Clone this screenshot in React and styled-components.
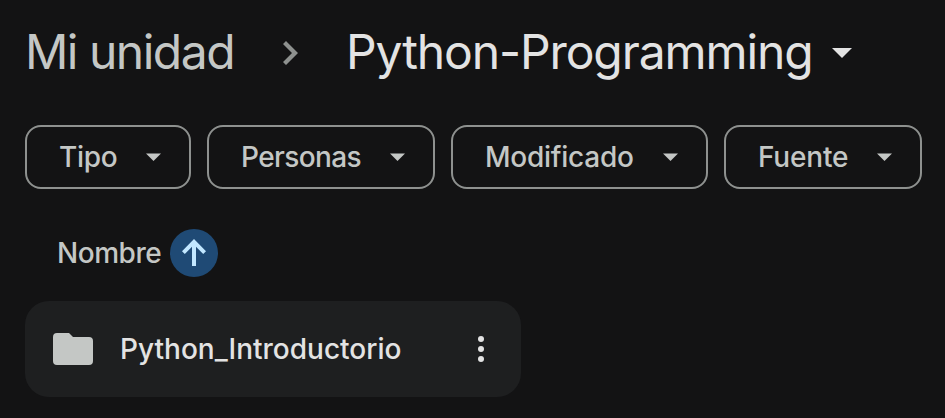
import React from "react";
import styled, { createGlobalStyle } from "styled-components";

const Global = createGlobalStyle`
  *, *::before, *::after { box-sizing: border-box; }
  body { margin: 0; background: #131314; overflow: hidden; }
  button { font: inherit; color: inherit; background: none; border: 0; padding: 0; margin: 0; }
  svg { display: block; flex: none; fill: currentColor; }
`;

const Page = styled.main`
  width: 945px;
  height: 418px;
  padding: 17px 23px 0 25px;
  background: #131314;
  color: #c4c7c5;
  font-family: Inter, sans-serif;
`;

const Breadcrumbs = styled.nav`
  display: flex;
  align-items: center;
  height: 72px;
`;

const Crumb = styled.button`
  display: flex;
  align-items: center;
  width: ${(p) => p.$width}px;
  padding-bottom: 2px;
  font-size: 48px;
  line-height: 70px;
  letter-spacing: ${(p) => p.$tracking}px;
  white-space: nowrap;
  color: ${(p) => (p.$current ? "#e3e3e3" : "#c4c7c5")};
`;

const Separator = styled.svg`
  width: 15px;
  height: 24px;
  margin: 0 48px 0 39px;
  color: #8e918f;
`;

const CrumbCaret = styled.svg`
  width: 20px;
  height: 10px;
  margin-left: 20px;
  color: #e3e3e3;
`;

const Filters = styled.div`
  display: flex;
  gap: 16px;
  margin-top: 36px;
`;

const Chip = styled.button`
  display: flex;
  align-items: center;
  justify-content: space-between;
  width: ${(p) => p.$width}px;
  height: 64px;
  padding: 0 28px 0 32px;
  border: 2px solid #8e918f;
  border-radius: 16px;
  font-size: 28px;
  font-weight: 500;
  letter-spacing: ${(p) => p.$tracking}px;
  white-space: nowrap;
`;

const ChipLabel = styled.span`
  padding-bottom: 1px;
`;

const ChipCaret = styled.svg`
  width: 15px;
  height: 8px;
`;

const SortHeader = styled.div`
  display: flex;
  align-items: center;
  height: 48px;
  margin-top: 40px;
  padding-left: 32px;
`;

const SortLabel = styled.span`
  width: 113px;
  padding-bottom: 1px;
  font-size: 28px;
  font-weight: 500;
  letter-spacing: -0.45px;
`;

const SortButton = styled.button`
  display: grid;
  place-items: center;
  width: 48px;
  height: 48px;
  border-radius: 50%;
  background: #1f4a75;
  color: #c2e7ff;
`;

const FolderCard = styled.article`
  display: flex;
  align-items: center;
  width: 496px;
  height: 96px;
  margin-top: 24px;
  padding: 0 37px 0 28px;
  border-radius: 24px;
  background: #1e1f20;
`;

const FolderName = styled.span`
  flex: 1;
  margin-left: 27px;
  padding-bottom: 1px;
  font-size: 28px;
  font-weight: 500;
  letter-spacing: 0;
  color: #e3e3e3;
`;

const MoreButton = styled.button`
  color: #e3e3e3;
`;

const filters = [
  { name: "Tipo", width: 166, tracking: -0.3 },
  { name: "Personas", width: 228, tracking: -0.6 },
  { name: "Modificado", width: 257, tracking: -0.25 },
  { name: "Fuente", width: 198, tracking: -0.2 },
];

export default function App() {
  return (
    <Page>
      <Global />
      <Breadcrumbs>
        <Crumb $width={219} $tracking={-1.5}>Mi unidad</Crumb>
        <Separator viewBox="0 0 15 24" aria-hidden="true">
          <path d="M3 0 0 3l9 9-9 9 3 3 12-12z" />
        </Separator>
        <Crumb $current $width={466} $tracking={-1.1}>Python-Programming</Crumb>
        <CrumbCaret viewBox="0 0 20 10" aria-hidden="true">
          <path d="M0 0h20L10 10z" />
        </CrumbCaret>
      </Breadcrumbs>
      <Filters>
        {filters.map((f) => (
          <Chip key={f.name} $width={f.width} $tracking={f.tracking}>
            <ChipLabel>{f.name}</ChipLabel>
            <ChipCaret viewBox="0 0 15 8" aria-hidden="true">
              <path d="M0 .5h15L7.5 8z" />
            </ChipCaret>
          </Chip>
        ))}
      </Filters>
      <SortHeader>
        <SortLabel>Nombre</SortLabel>
        <SortButton aria-label="Orden ascendente">
          <svg width="24" height="28" viewBox="0 0 24 28">
            <path d="M10 27V7.7l-7.2 7.2L0 12.2 12 0l12 12.2-2.8 2.7L14 7.7V27z" />
          </svg>
        </SortButton>
      </SortHeader>
      <FolderCard>
        <svg width="40" height="32" viewBox="0 0 40 32">
          <path d="M4 0h12l4 4h16a4 4 0 0 1 4 4v20a4 4 0 0 1-4 4H4a4 4 0 0 1-4-4V4a4 4 0 0 1 4-4z" />
        </svg>
        <FolderName>Python_Introductorio</FolderName>
        <MoreButton aria-label="Más acciones">
          <svg width="6" height="26" viewBox="0 0 6 26">
            <circle cx="3" cy="3" r="3" />
            <circle cx="3" cy="13" r="3" />
            <circle cx="3" cy="23" r="3" />
          </svg>
        </MoreButton>
      </FolderCard>
    </Page>
  );
}
